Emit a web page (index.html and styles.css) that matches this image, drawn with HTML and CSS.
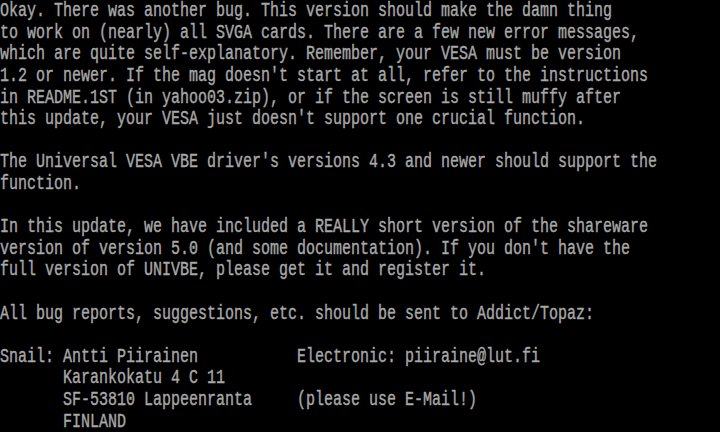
FILE: index.html
```html
<!DOCTYPE html>
<html lang="en">
<head>
<meta charset="UTF-8">
<title>readme</title>
<link rel="stylesheet" href="styles.css">
</head>
<body>
<pre class="screen">Okay. There was another bug. This version should make the damn thing
to work on (nearly) all SVGA cards. There are a few new error messages,
which are quite self-explanatory. Remember, your VESA must be version
1.2 or newer. If the mag doesn't start at all, refer to the instructions
in README.1ST (in yahoo03.zip), or if the screen is still muffy after
this update, your VESA just doesn't support one crucial function.

The Universal VESA VBE driver's versions 4.3 and newer should support the
function.

In this update, we have included a REALLY short version of the shareware
version of version 5.0 (and some documentation). If you don't have the
full version of UNIVBE, please get it and register it.

All bug reports, suggestions, etc. should be sent to Addict/Topaz:

Snail: Antti Piirainen           Electronic: piiraine@lut.fi
       Karankokatu 4 C 11
       SF-53810 Lappeenranta     (please use E-Mail!)
       FINLAND</pre>
</body>
</html>
```

FILE: styles.css
```css
* {
  margin: 0;
  padding: 0;
  box-sizing: border-box;
}

html, body {
  width: 720px;
  height: 432px;
  overflow: hidden;
  background: #000;
}

.screen {
  padding-top: 1px;
  font-family: "Liberation Mono", monospace;
  font-size: 15px;
  line-height: 16px;
  color: #a8a8a8;
  -webkit-text-stroke: 0.3px #a8a8a8;
  transform: scaleY(1.35);
  transform-origin: 0 0;
}
```
